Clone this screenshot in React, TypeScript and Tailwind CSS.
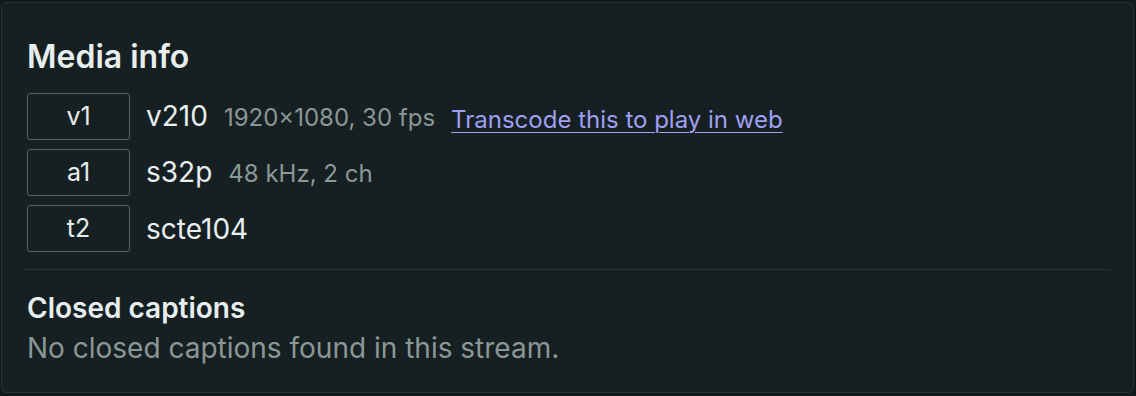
import React from "react";

type Track = {
  id: string;
  codec: string;
  detail?: string;
  transcode?: boolean;
};

const tracks: Track[] = [
  { id: "v1", codec: "v210", detail: "1920×1080, 30 fps", transcode: true },
  { id: "a1", codec: "s32p", detail: "48 kHz, 2 ch" },
  { id: "t2", codec: "scte104" },
];

function TrackRow({ track }: { track: Track }) {
  return (
    <div className="flex items-center h-[47px]">
      <div className="w-[103px] h-[47px] shrink-0 flex items-center justify-center border border-[#5b6161] rounded-[3px] text-[25px] leading-none text-[#e6ecec]">
        {track.id}
      </div>
      <div className="ml-[16px] flex items-baseline">
        <span className="text-[28px] leading-[36px] text-[#e8eeee]">{track.codec}</span>
        {track.detail && (
          <span className="ml-[16px] text-[24px] text-[#8b9796]">{track.detail}</span>
        )}
        {track.transcode && (
          <a
            href="#"
            className="ml-[16px] text-[24px] text-[#a09ff2] underline underline-offset-[4px] decoration-1 translate-y-[2px]"
          >
            Transcode this to play in web
          </a>
        )}
      </div>
    </div>
  );
}

export default function App() {
  return (
    <div
      className="w-[1136px] h-[396px] bg-[#101a1c] pt-[2px] pl-[1px]"
      style={{ fontFamily: "Inter, 'Noto Sans', sans-serif" }}
    >
      <div className="w-[1133px] h-[391px] bg-[#162022] border border-[#263130] rounded-[6px] px-[25px] pt-[36px]">
        <h2 className="text-[32px] leading-[36px] font-semibold text-[#e8eeee]">Media info</h2>
        <div className="mt-[18px] flex flex-col gap-[9px]">
          {tracks.map((t) => (
            <TrackRow key={t.id} track={t} />
          ))}
        </div>
        <div className="mt-[17px] ml-[-4px] mr-[-2px] h-px bg-[#283433]" />
        <h3 className="mt-[22px] text-[28px] leading-[32px] font-semibold text-[#e8eeee]">
          Closed captions
        </h3>
        <p className="mt-[8px] text-[28px] leading-[32px] text-[#8b9796]">
          No closed captions found in this stream.
        </p>
      </div>
    </div>
  );
}
